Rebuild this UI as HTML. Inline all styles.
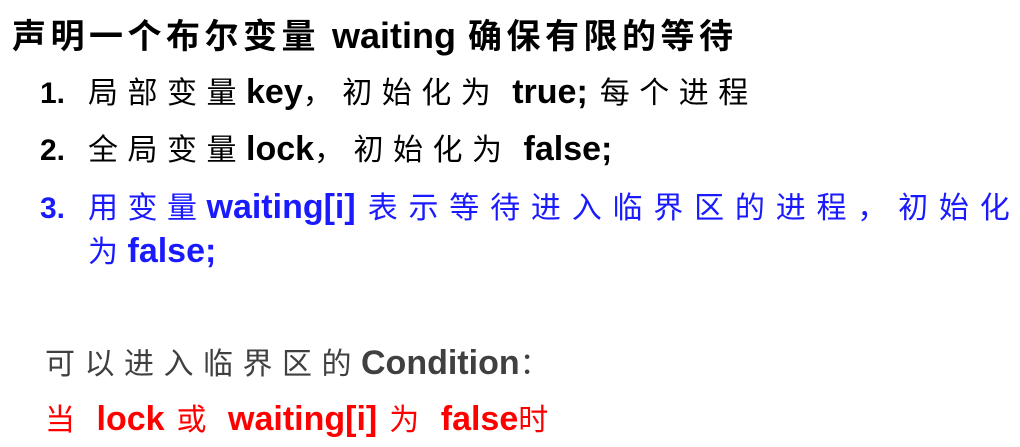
<html><head><style>
body{margin:0;width:1020px;height:447px;background:#fff;overflow:hidden;position:relative;font-family:"Liberation Sans","Noto Sans CJK SC",sans-serif;}
.l{position:absolute;white-space:nowrap;line-height:1;font-size:29px;}
.c{font-family:"Noto Sans CJK SC",sans-serif;font-weight:400;letter-spacing:9.5px;font-size:30px;}
.b,b{font-weight:bold;font-size:34px;}
.t{font-family:'Noto Sans CJK SC';font-weight:bold;letter-spacing:4.5px;font-size:34px;}
.n{display:inline-block;width:48px;font-weight:bold;font-size:30px;}
.g{display:inline-block;width:12px;}
</style></head><body>
<div class="l" style="left:12px;top:17px;"><span class="t">声明一个布尔变量</span><span class="g"></span><b style="font-size:36px">waiting</b><span class="g"></span><span class="t">确保有限的等待</span></div>
<div class="l" style="left:40px;top:75px;"><span class="n">1.</span><span class="c">局部变量</span><b>key</b><span class="c">，初始化为</span><span class="g"></span><b>true;</b><span class="g"></span><span class="c">每个进程</span></div>
<div class="l" style="left:40px;top:132px;"><span class="n">2.</span><span class="c">全局变量</span><b>lock</b><span class="c">，初始化为</span><span class="g"></span><b>false;</b></div>
<div class="l" style="left:40px;top:190px;color:#1a1aff;"><span class="n">3.</span><span class="c">用变量</span><b>waiting[i]</b><span class="g"></span><span class="c" style="letter-spacing:10.8px">表示等待进入临界区的进程，初始化</span></div>
<div class="l" style="left:88px;top:234px;color:#1a1aff;"><span class="c">为</span><b>false;</b></div>
<div class="l" style="left:45px;top:346px;color:#404040;"><span class="c">可以进入临界区的</span><b>Condition</b><span class="c">：</span></div>
<div class="l" style="left:45px;top:402px;color:#ff0000;"><span class="c">当</span><span class="g"></span><b>lock</b><span class="g"></span><span class="c">或</span><span class="g"></span><b>waiting[i]</b><span class="g"></span><span class="c">为</span><span class="g"></span><b>false</b><span class="c">时</span></div>
</body></html>
